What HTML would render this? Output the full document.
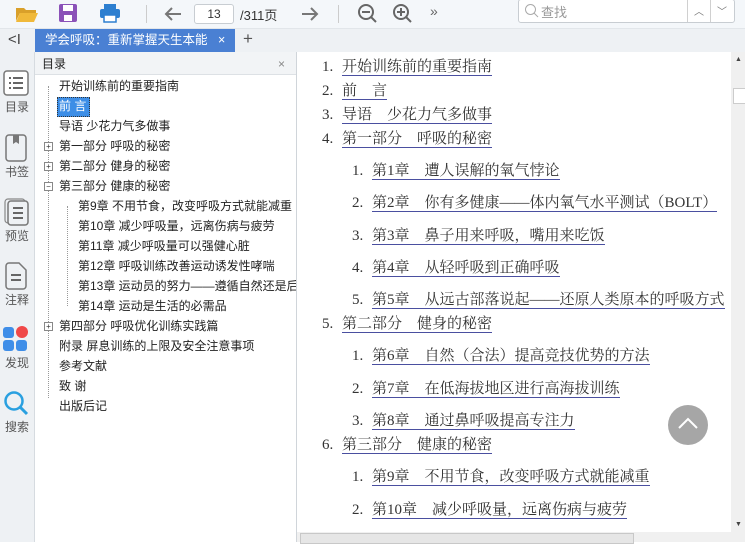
<html><head><style>
body{margin:0;width:745px;height:542px;overflow:hidden;background:#fff;font-family:"Liberation Sans","Noto Sans CJK SC",sans-serif;position:relative}
.a{position:absolute}
#tb{left:0;top:0;width:745px;height:28px;background:#f4f7fa;border-bottom:1px solid #e2e6ea}
#tab{left:0;top:29px;width:745px;height:23px;background:#eef1f4}
#side{left:0;top:52px;width:34px;height:490px;background:#eef1f4;border-right:1px solid #d6dbe0}
.si{position:absolute;left:0;width:34px;text-align:center;font-size:12px;color:#555}
#toc{left:35px;top:52px;width:261px;height:490px;background:#fff;border-right:1px solid #d0d5da}
.t{position:absolute;font-size:12px;color:#222;white-space:nowrap;line-height:16px}
.c{position:absolute;font-family:"Liberation Serif","Noto Serif CJK SC",serif;font-size:15px;color:#333;white-space:nowrap;line-height:18px}
.c b{font-weight:normal;display:inline-block;width:20px}
.c u{text-decoration:none;border-bottom:1px solid #4a4fa0}
.pm{position:absolute;width:7px;height:7px;border:1px solid #888;font-size:8px;line-height:7px;text-align:center;color:#333;background:#fff}
</style></head><body>
<div class="a" id="tb">
<svg class="a" style="left:14px;top:4px" width="26" height="20"><path d="M2 4h8l2 2h10v3H6L2 17z" fill="#d9a02a"/><path d="M6 9h18l-4 9H2z" fill="#f0b93a"/></svg>
<svg class="a" style="left:58px;top:3px" width="20" height="20"><rect x="1" y="1" width="18" height="18" rx="2" fill="#8b52b8"/><rect x="5" y="2" width="10" height="6" fill="#fff"/><rect x="6" y="12" width="8" height="6" fill="#fff"/></svg>
<svg class="a" style="left:99px;top:3px" width="22" height="20"><rect x="5" y="1" width="12" height="5" fill="#2d7fd0"/><rect x="1" y="6" width="20" height="9" rx="2" fill="#2d7fd0"/><rect x="5" y="12" width="12" height="7" fill="#fff" stroke="#2d7fd0" stroke-width="1.5"/></svg>
<div class="a" style="left:146px;top:5px;width:1px;height:18px;background:#ccc"></div>
<svg class="a" style="left:163px;top:5px" width="20" height="18"><path d="M18 9H3M9 3L3 9l6 6" stroke="#777" stroke-width="2" fill="none"/></svg>
<div class="a" style="left:194px;top:4px;width:38px;height:18px;border:1px solid #c8cdd2;background:#fff;border-radius:3px;font-size:12px;text-align:center;line-height:18px;color:#333">13</div>
<div class="a" style="left:240px;top:5px;font-size:13px;color:#333">/311页</div>
<svg class="a" style="left:300px;top:5px" width="20" height="18"><path d="M2 9h15M11 3l6 6-6 6" stroke="#777" stroke-width="2" fill="none"/></svg>
<div class="a" style="left:338px;top:5px;width:1px;height:18px;background:#ccc"></div>
<svg class="a" style="left:357px;top:3px" width="22" height="22"><circle cx="9" cy="9" r="7" stroke="#666" stroke-width="2" fill="none"/><path d="M5 9h8M14 14l5 5" stroke="#666" stroke-width="2"/></svg>
<svg class="a" style="left:392px;top:3px" width="22" height="22"><circle cx="9" cy="9" r="7" stroke="#666" stroke-width="2" fill="none"/><path d="M5 9h8M9 5v8M14 14l5 5" stroke="#666" stroke-width="2"/></svg>
<div class="a" style="left:430px;top:3px;font-size:14px;color:#666">»</div>
<div class="a" style="left:518px;top:-1px;width:215px;height:22px;border:1px solid #c8cdd2;background:#fff;border-radius:3px"></div>
<svg class="a" style="left:524px;top:3px" width="16" height="16"><circle cx="6.5" cy="6.5" r="5" stroke="#aaa" fill="none"/><path d="M10 10l4 4" stroke="#aaa"/></svg>
<div class="a" style="left:541px;top:2px;font-size:13px;color:#999">查找</div>
<div class="a" style="left:687px;top:0;width:1px;height:22px;background:#d0d0d0"></div>
<div class="a" style="left:710px;top:0;width:1px;height:22px;background:#d0d0d0"></div>
<div class="a" style="left:694px;top:3px;font-size:10px;color:#777">︿</div>
<div class="a" style="left:717px;top:3px;font-size:10px;color:#777">﹀</div>
</div>
<div class="a" id="tab">
<div class="a" style="left:8px;top:2px;font-size:15px;color:#444">&lt;I</div>
<div class="a" style="left:35px;top:0;width:200px;height:23px;background:#4a80d3;color:#fff;font-size:12.5px;line-height:23px"><span style="position:absolute;left:10px;width:168px;overflow:hidden;white-space:nowrap">学会呼吸：重新掌握天生本能（</span><span style="position:absolute;left:183px">×</span></div>
<div class="a" style="left:243px;top:0;font-size:17px;color:#555">+</div>
</div>
<div class="a" id="side">
<svg class="a" style="left:3px;top:18px" width="26" height="26"><rect x="1" y="1" width="24" height="24" rx="3" fill="#fff" stroke="#777" stroke-width="1.5"/><path d="M6 8h2M10 8h10M6 13h2M10 13h10M6 18h2M10 18h10" stroke="#666" stroke-width="2"/></svg>
<div class="si" style="top:46px">目录</div>
<svg class="a" style="left:5px;top:82px" width="22" height="28"><rect x="1" y="1" width="20" height="26" rx="3" fill="none" stroke="#777" stroke-width="1.5"/><path d="M8 1v9l3-2 3 2V1" fill="#777"/></svg>
<div class="si" style="top:111px">书签</div>
<svg class="a" style="left:4px;top:146px" width="26" height="28"><rect x="1" y="1" width="20" height="24" rx="3" fill="none" stroke="#888" stroke-width="1.2"/><rect x="4" y="3" width="20" height="24" rx="3" fill="#eef1f4" stroke="#777" stroke-width="1.5"/><path d="M9 10h10M9 15h10M9 20h10" stroke="#666" stroke-width="2"/></svg>
<div class="si" style="top:175px">预览</div>
<svg class="a" style="left:5px;top:210px" width="22" height="28"><path d="M1 4a3 3 0 0 1 3-3h10l7 7v16a3 3 0 0 1-3 3H4a3 3 0 0 1-3-3z" fill="none" stroke="#777" stroke-width="1.5"/><path d="M6 13h10M6 18h10" stroke="#666" stroke-width="2"/></svg>
<div class="si" style="top:239px">注释</div>
<div class="a" style="left:3px;top:275px;width:11px;height:11px;background:#3f8ee8;border-radius:3px"></div>
<div class="a" style="left:16px;top:274px;width:12px;height:12px;background:#f04848;border-radius:6px"></div>
<div class="a" style="left:3px;top:288px;width:11px;height:11px;background:#3f8ee8;border-radius:3px"></div>
<div class="a" style="left:16px;top:288px;width:11px;height:11px;background:#3f8ee8;border-radius:3px"></div>
<div class="si" style="top:302px">发现</div>
<svg class="a" style="left:3px;top:338px" width="26" height="28"><circle cx="11" cy="11" r="8.5" stroke="#2aa0e0" stroke-width="2.5" fill="none"/><path d="M17 17l7 7" stroke="#2aa0e0" stroke-width="3"/></svg>
<div class="si" style="top:366px">搜索</div>
</div>
<div class="a" id="toc">
<div class="a" style="left:0;top:0;width:261px;height:22px;background:#f2f4f6;border-bottom:1px solid #dde1e5"></div>
<div class="t" style="left:7px;top:4px">目录</div>
<div class="t" style="left:243px;top:4px;color:#888">×</div>
<div class="a" style="left:13px;top:34px;height:312px;border-left:1px dotted #999"></div>
<div class="a" style="left:32px;top:154px;height:100px;border-left:1px dotted #999"></div>
<div class="t" style="left:24px;top:26px">开始训练前的重要指南</div>
<div class="a" style="left:22px;top:45px;width:31px;height:18px;background:#3d8ee6;border:1px dotted #333"></div>
<div class="t" style="left:24px;top:46px;color:#fff">前 言</div>
<div class="t" style="left:24px;top:66px">导语 少花力气多做事</div>
<div class="pm" style="left:9px;top:90px">+</div><div class="t" style="left:24px;top:86px">第一部分 呼吸的秘密</div>
<div class="pm" style="left:9px;top:110px">+</div><div class="t" style="left:24px;top:106px">第二部分 健身的秘密</div>
<div class="pm" style="left:9px;top:130px">−</div><div class="t" style="left:24px;top:126px">第三部分 健康的秘密</div>
<div class="t" style="left:43px;top:146px">第9章 不用节食，改变呼吸方式就能减重</div>
<div class="t" style="left:43px;top:166px">第10章 减少呼吸量，远离伤病与疲劳</div>
<div class="t" style="left:43px;top:186px">第11章 减少呼吸量可以强健心脏</div>
<div class="t" style="left:43px;top:206px">第12章 呼吸训练改善运动诱发性哮喘</div>
<div class="t" style="left:43px;top:226px;width:218px;overflow:hidden">第13章 运动员的努力——遵循自然还是后天</div>
<div class="t" style="left:43px;top:246px">第14章 运动是生活的必需品</div>
<div class="pm" style="left:9px;top:270px">+</div><div class="t" style="left:24px;top:266px">第四部分 呼吸优化训练实践篇</div>
<div class="t" style="left:24px;top:286px">附录 屏息训练的上限及安全注意事项</div>
<div class="t" style="left:24px;top:306px">参考文献</div>
<div class="t" style="left:24px;top:326px">致 谢</div>
<div class="t" style="left:24px;top:346px">出版后记</div>
</div>
<div class="c" style="left:322px;top:58px"><b>1.</b><u>开始训练前的重要指南</u></div>
<div class="c" style="left:322px;top:82px"><b>2.</b><u>前　言</u></div>
<div class="c" style="left:322px;top:106px"><b>3.</b><u>导语　少花力气多做事</u></div>
<div class="c" style="left:322px;top:130px"><b>4.</b><u>第一部分　呼吸的秘密</u></div>
<div class="c" style="left:352px;top:162px"><b>1.</b><u>第1章　遭人误解的氧气悖论</u></div>
<div class="c" style="left:352px;top:194px"><b>2.</b><u>第2章　你有多健康——体内氧气水平测试（BOLT）</u></div>
<div class="c" style="left:352px;top:227px"><b>3.</b><u>第3章　鼻子用来呼吸，嘴用来吃饭</u></div>
<div class="c" style="left:352px;top:259px"><b>4.</b><u>第4章　从轻呼吸到正确呼吸</u></div>
<div class="c" style="left:352px;top:291px"><b>5.</b><u>第5章　从远古部落说起——还原人类原本的呼吸方式</u></div>
<div class="c" style="left:322px;top:315px"><b>5.</b><u>第二部分　健身的秘密</u></div>
<div class="c" style="left:352px;top:347px"><b>1.</b><u>第6章　自然（合法）提高竞技优势的方法</u></div>
<div class="c" style="left:352px;top:380px"><b>2.</b><u>第7章　在低海拔地区进行高海拔训练</u></div>
<div class="c" style="left:352px;top:412px"><b>3.</b><u>第8章　通过鼻呼吸提高专注力</u></div>
<div class="c" style="left:322px;top:436px"><b>6.</b><u>第三部分　健康的秘密</u></div>
<div class="c" style="left:352px;top:468px"><b>1.</b><u>第9章　不用节食，改变呼吸方式就能减重</u></div>
<div class="c" style="left:352px;top:501px"><b>2.</b><u>第10章　减少呼吸量，远离伤病与疲劳</u></div>
<div class="a" style="left:731px;top:52px;width:14px;height:490px;background:#f0f0f0"></div>
<div class="a" style="left:733px;top:88px;width:11px;height:14px;background:#fff;border:1px solid #ccc"></div>
<div class="a" style="left:735px;top:56px;font-size:7px;color:#444">▲</div>
<div class="a" style="left:735px;top:521px;font-size:7px;color:#444">▼</div>
<div class="a" style="left:297px;top:532px;width:434px;height:10px;background:#f0f0f0"></div>
<div class="a" style="left:300px;top:533px;width:332px;height:9px;background:#e6e6e6;border:1px solid #c8c8c8"></div>
<div class="a" style="left:668px;top:405px;width:40px;height:40px;border-radius:20px;background:#a6a6a6"></div>
<svg class="a" style="left:668px;top:405px" width="40" height="40"><path d="M11 23l9-9 9 9" stroke="#fff" stroke-width="2" fill="none"/></svg>
</body></html>
